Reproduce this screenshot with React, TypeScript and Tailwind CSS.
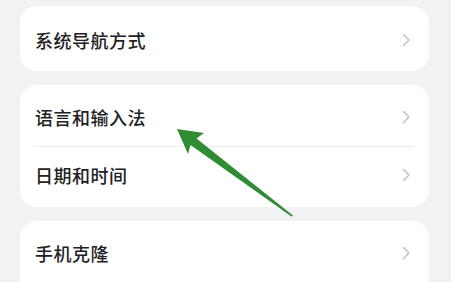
import React from "react";

type Row = { label: string };

const GROUPS: { rows: Row[]; first?: boolean }[] = [
  { rows: [{ label: "系统导航方式" }], first: true },
  { rows: [{ label: "语言和输入法" }, { label: "日期和时间" }] },
  { rows: [{ label: "手机克隆" }, { label: "" }] },
];

function Chevron() {
  return (
    <svg width="9" height="14" viewBox="0 0 9 14" fill="none">
      <path
        d="M1.5 1.5 L7 7 L1.5 12.5"
        stroke="#c3c3c6"
        strokeWidth="1.5"
        strokeLinecap="round"
        strokeLinejoin="round"
      />
    </svg>
  );
}

function SettingRow({
  label,
  tall,
  later,
}: {
  label: string;
  tall?: boolean;
  later?: boolean;
}) {
  const h = tall
    ? "h-[65px] pt-[3px]"
    : later
    ? "h-[60px] pb-[4px]"
    : "h-[61px] pt-[3px]";
  return (
    <div className={`flex items-center justify-between pl-[15px] pr-[18px] ${h}`}>
      <span className="text-[18px] font-medium text-[#222224] tracking-[0.5px]">
        {label}
      </span>
      <Chevron />
    </div>
  );
}

export default function App() {
  return (
    <div
      className="relative w-[451px] h-[282px] overflow-hidden bg-[#f1f2f4] pt-[6px]"
      style={{ fontFamily: '"Noto Sans CJK SC", "Noto Sans", sans-serif' }}
    >
      <div className="ml-[20px] w-[409px] flex flex-col gap-[14px]">
        {GROUPS.map((g, gi) => (
          <div key={gi} className="bg-white rounded-[17px] overflow-hidden">
            {g.rows.map((r, ri) => (
              <React.Fragment key={ri}>
                {ri > 0 && <div className="mx-[15px] h-px bg-[#ececee]" />}
                <SettingRow label={r.label} tall={g.first} later={ri > 0} />
              </React.Fragment>
            ))}
          </div>
        ))}
      </div>

      {/* green annotation arrow */}
      <svg
        className="absolute left-0 top-0 pointer-events-none"
        width="451"
        height="282"
        viewBox="0 0 451 282"
      >
        <polygon
          points="177,129 204,133 196.5,138.5 293,215.5 291.5,216.5 190.5,145 188,154"
          fill="#2f8c33"
        />
      </svg>
    </div>
  );
}
